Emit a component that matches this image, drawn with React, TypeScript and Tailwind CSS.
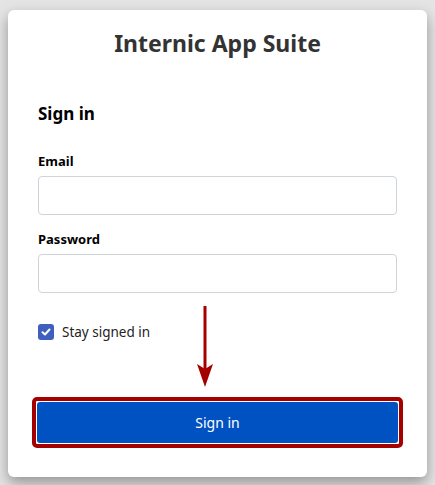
import React from 'react';

const App: React.FC = () => {
  return (
    <div className="w-[435px] h-[485px] bg-[#e4e4e4] pt-[10px] px-[8px] font-['Segoe_UI','Noto_Sans','Open_Sans',sans-serif]">
      <div className="relative h-[467px] bg-white rounded-[6px] shadow-[0_6px_14px_rgba(0,0,0,0.35)] px-[30px] pt-[21px]">
        {/* Title */}
        <h1 className="text-center text-[23px] font-bold text-[#333] leading-[24px]">
          Internic App Suite
        </h1>

        <h2 className="mt-[47px] text-[17px] font-bold text-black leading-[24px]">Sign in</h2>

        <label className="block mt-[26px] text-[13px] font-bold text-black leading-[18px]">Email</label>
        <input className="block mt-[6px] w-full h-[39px] rounded-[4px] border border-[#ced4da] bg-white" />

        <label className="block mt-[15px] text-[13px] font-bold text-black leading-[18px]">Password</label>
        <input type="password" className="block mt-[6px] w-full h-[39px] rounded-[4px] border border-[#ced4da] bg-white" />

        <div className="mt-[30px] flex items-center gap-[8px]">
          <span className="w-[16px] h-[16px] rounded-[3px] bg-[#3f5fbf] flex items-center justify-center">
            <svg width="10" height="10" viewBox="0 0 10 10">
              <path d="M1.5 5.2 L4 7.5 L8.5 2.5" fill="none" stroke="white" strokeWidth="2" strokeLinecap="round" strokeLinejoin="round" />
            </svg>
          </span>
          <span className="text-[13.5px] text-[#222] leading-[18px]">Stay signed in</span>
        </div>

        {/* annotation arrow */}
        <svg className="absolute left-[187px] top-[296px]" width="20" height="82" viewBox="0 0 20 82">
          <rect x="8.5" y="0" width="3" height="64" fill="#a50000" />
          <path d="M2 58 L10 81 L18 58 L10 63 Z" fill="#a50000" />
        </svg>

        <div className="mt-[56px] -mx-[6px] rounded-[5px] border-[4px] border-[#a50000] p-px">
          <button className="w-full h-[41px] rounded-[3px] bg-[#0052c2] text-white text-[14px] font-['Segoe_UI','Noto_Sans',sans-serif]">
            Sign in
          </button>
        </div>
      </div>
    </div>
  );
};

export default App;
